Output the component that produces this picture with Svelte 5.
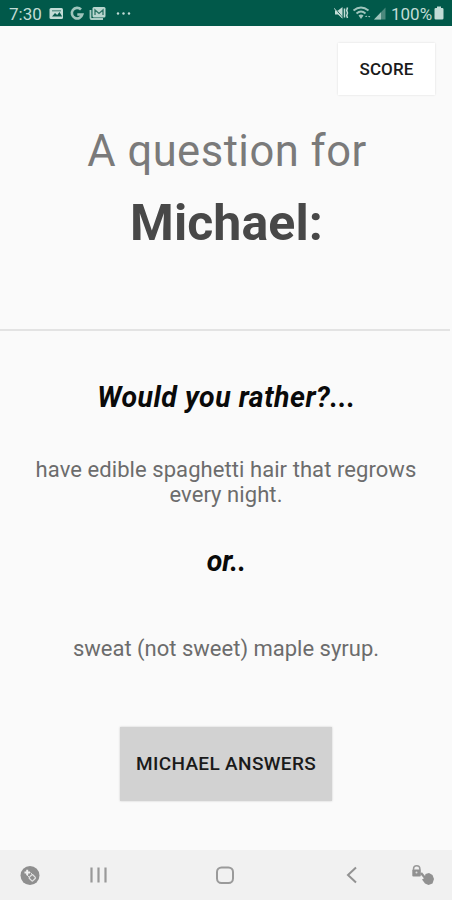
<script>
    let player = 'Michael';
    let firstOption = 'have edible spaghetti hair that regrows every night.';
    let secondOption = 'sweat (not sweet) maple syrup.';
    let time = '7:30';
    let battery = 100;
</script>

<div class="screen">
    <div class="status">
        <span class="clock">{time}</span>
        <svg class="notifications" width="84" height="25" viewBox="0 0 84 25">
            <rect x="0.5" y="8" width="13.5" height="11" rx="1.5" fill="#c2dcd6" />
            <path d="M3 16.5l3-3.5 2.2 2 2.3-3 2.7 4.5z" fill="#075a4c" />
            <rect x="3" y="10" width="9" height="1.5" fill="#075a4c" opacity=".5" />
            <path d="M32 9.5a5.3 5.3 0 1 0 1.3 5h-5" fill="none" stroke="#9fc5bc" stroke-width="2.6" />
            <path d="M41.5 10v8q0 1 1 1h11.5" fill="none" stroke="#a9ccc4" stroke-width="1.8" />
            <rect x="43.5" y="7" width="13" height="10.5" rx="1.5" fill="#b9d6cf" />
            <path d="M46 15v-5l4 3.5 4-3.5v5" fill="none" stroke="#2d7466" stroke-width="1.3" />
            <circle cx="69" cy="13.5" r="1.2" fill="#c2dcd6" />
            <circle cx="74.5" cy="13.5" r="1.2" fill="#c2dcd6" />
            <circle cx="80" cy="13.5" r="1.2" fill="#c2dcd6" />
        </svg>
        <svg class="signals" width="57" height="25" viewBox="0 0 57 25">
            <path d="M1 10.5h3l4.5-3.5v11.5l-4.5-4H1z" fill="#c2dcd6" />
            <path d="M0 7l9 11" stroke="#075a4c" stroke-width="1" />
            <path d="M0 8.2l8.5 10" stroke="#c2dcd6" stroke-width="1" />
            <path d="M10.5 8.5v9M13.5 7.5l-.8 3 .8 2.5-.8 2.5.8 2.5" fill="none" stroke="#c2dcd6" stroke-width="1.5" />
            <path d="M19.5 10.5q7.5-6 15 0M22.5 13.5q4.5-4 9 0" fill="none" stroke="#9fc5bc" stroke-width="1.9" />
            <path d="M24.5 15.5q2.5-2 5 0L27 19z" fill="#9fc5bc" />
            <path d="M31 17l1.2-1.5 1.2 1.5zM34 16l1.2 1.5 1.2-1.5z" fill="#9fc5bc" />
            <path d="M51.5 7.5V19.5H40z" fill="#4b897d" />
            <path d="M47 12.3V19.5H40z" fill="#9fc5bc" />
        </svg>
        <span class="battery">{battery}%</span>
        <svg width="10" height="25" viewBox="0 0 10 25">
            <path d="M3 6.5h4V8h1.2q1.3 0 1.3 1.3v8.9q0 1.3-1.3 1.3H1.8Q.5 19.5.5 18.2V9.3Q.5 8 1.8 8H3z" fill="#c2dcd6" />
        </svg>
    </div>

    <header>
        <button class="score">SCORE</button>
        <h2>A question for</h2>
        <h1>{player}:</h1>
    </header>

    <main>
        <h3 class="rather">Would you rather?...</h3>
        <p class="option">{firstOption}</p>
        <h3 class="or">or..</h3>
        <p class="option second">{secondOption}</p>
        <button class="answer">{player.toUpperCase()} ANSWERS</button>
    </main>

    <nav>
        <svg width="452" height="50" viewBox="0 0 452 50">
            <circle cx="30" cy="25.5" r="9.5" fill="#8f8f8f" />
            <path d="M24.5 22.5h5.5M27.2 19.8v5.5" stroke="#f1f1f1" stroke-width="2" />
            <path d="M27 25l3 3M30.5 22.5l3 3" stroke="#dedede" stroke-width="1" />
            <rect x="29.8" y="25.3" width="5" height="5" rx="1" transform="rotate(45 32.3 27.8)" fill="none" stroke="#e2e2e2" stroke-width="1.3" />

            <path d="M91.5 17.5v15M98.5 17.5v15M105.5 17.5v15" stroke="#999" stroke-width="2.2" />

            <rect x="217" y="17.5" width="16" height="15.5" rx="4.5" fill="none" stroke="#9a9a9a" stroke-width="2" />

            <path d="M356 17.5l-8 7.5 8 7.5" fill="none" stroke="#929292" stroke-width="2" />

            <path d="M413.5 20v-1a3.2 3.2 0 0 1 6.4 0v1" fill="none" stroke="#999" stroke-width="1.5" />
            <rect x="412.3" y="19.5" width="8.5" height="7" rx="1" fill="#919191" />
            <circle cx="416.5" cy="22.5" r="1" fill="#ddd" />
            <path d="M421 23l5 6" stroke="#919191" stroke-width="2.4" />
            <path d="M422 29.5l2.5-1.5 1-4 3.5-1 3.5 2 1.5 4-1.5 4.5-4 1.5-3.5-1.5z" fill="#919191" />
        </svg>
    </nav>
</div>

<style>
    :global(body) {
        background: #fafafa;
    }

    .screen {
        display: flex;
        flex-direction: column;
        width: 452px;
        height: 900px;
        overflow: hidden;
        background: #fafafa;
        font-family: Roboto, sans-serif;
        text-align: center;
    }

    .status {
        display: flex;
        height: 26px;
        padding: 0 8px 0 9px;
        background: #01594a;
        color: #c2dcd6;
        font-size: 17px;
        line-height: 28px;
        white-space: nowrap;
    }

    .status svg {
        flex: none;
    }

    .clock {
        width: 40px;
        text-align: left;
    }

    .signals {
        margin-left: auto;
    }

    .battery {
        width: 43px;
        text-align: left;
    }

    header {
        display: flex;
        flex-direction: column;
        align-items: center;
        height: 305px;
        padding-top: 17px;
        box-sizing: border-box;
        margin-right: 2px;
        border-bottom: 2px solid #e3e3e3;
    }

    h1, h2, h3, p {
        margin: 0;
        white-space: nowrap;
    }

    button {
        padding: 0 0 1px;
        border: none;
        font-family: inherit;
        font-weight: 500;
        color: #1a1a1a;
        cursor: pointer;
    }

    .score {
        align-self: flex-end;
        width: 97px;
        height: 52px;
        margin-right: 15px;
        background: #fff;
        box-shadow: 0 0 2px #ddd;
        font-size: 17px;
        letter-spacing: 0.1px;
    }

    h2 {
        margin-top: 32px;
        padding-left: 4px;
        font-size: 43.5px;
        line-height: 50px;
        font-weight: 400;
        letter-spacing: 0.5px;
        color: #7a7a7a;
    }

    h1 {
        margin-top: 17px;
        padding-left: 3px;
        font-size: 50px;
        line-height: 58px;
        font-weight: 700;
        letter-spacing: 0.1px;
        color: #484848;
    }

    main {
        flex: 1;
        display: flex;
        flex-direction: column;
        align-items: center;
        padding-top: 50px;
    }

    h3 {
        font-size: 28.5px;
        line-height: 34px;
        font-weight: 700;
        font-style: italic;
        color: #0a0a0a;
    }

    .rather {
        padding-left: 1px;
        letter-spacing: 0.5px;
    }

    .option {
        width: 400px;
        margin-top: 42px;
        font-size: 22px;
        line-height: 25px;
        letter-spacing: 0.07px;
        color: #6c6c6c;
        white-space: normal;
    }

    .or {
        margin-top: 38px;
        padding-left: 1px;
    }

    .second {
        margin-top: 57px;
        letter-spacing: 0;
    }

    .answer {
        width: 212px;
        height: 74px;
        margin-top: 66px;
        background: #d2d2d2;
        box-shadow: 0 0 2px #ccc;
        font-size: 19px;
        letter-spacing: 0.35px;
    }

    nav {
        height: 50px;
        background: #f1f1f1;
    }
</style>
